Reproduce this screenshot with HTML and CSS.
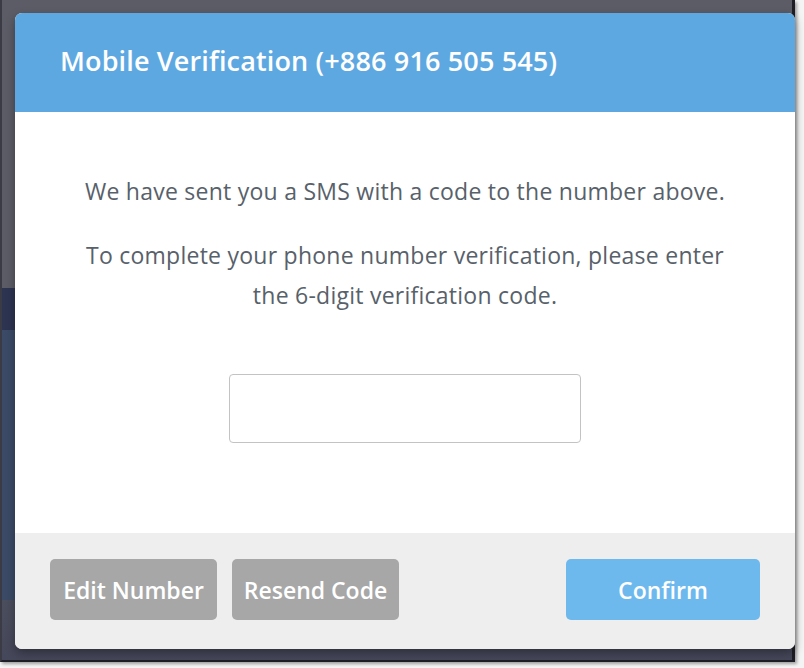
FILE: index.html
```
<html>

<head>
	<link rel="stylesheet" href="styles.css">
</head>

<body>
	<div id="screen">
		<div id="modal">
			<div id="modal-header">Mobile Verification (+886 916 505 545)</div>
			<div id="modal-body">
				<p>We have sent you a SMS with a code to the number above.</p>
				<p>To complete your phone number verification, please enter<br>the 6-digit verification code.</p>
				<input id="code-input" type="text" maxlength="6">
			</div>
			<div id="modal-footer">
				<button class="btn btn-gray">Edit Number</button>
				<button class="btn btn-gray">Resend Code</button>
				<button class="btn btn-blue">Confirm</button>
			</div>
		</div>
	</div>
</body>

</html>
```

FILE: styles.css
```
body {
	margin: 0;
	background: #f4f4f4;
	font-family: "Open Sans", Lato, sans-serif;
}

#screen {
	width: 795px;
	height: 662px;
	padding: 13px 0 0 13px;
	box-sizing: border-box;
	border-left: 2px solid #3a3b44;
	border-right: 3px solid #1e1f26;
	border-bottom: 2px solid #1e1f26;
	box-shadow: 2px 2px 3px rgba(0, 0, 0, 0.35);
	background: linear-gradient(to bottom,
			#5b5c65 0, #5b5c65 288px,
			#2d3452 288px, #2d3452 330px,
			#3b4a67 330px, #3b4a67 600px,
			#4b4e5d 600px, #45475a 100%);
}

#modal {
	width: 780px;
	height: 636px;
	display: flex;
	flex-direction: column;
	background: #fff;
	border-radius: 7px;
	overflow: hidden;
	box-shadow: 0 4px 10px rgba(0, 0, 0, 0.35);
}

#modal-header {
	height: 99px;
	flex: none;
	box-sizing: border-box;
	padding: 29px 0 0 45px;
	background: #5ea8e2;
	color: #fff;
	font-size: 27px;
	font-weight: 600;
	letter-spacing: 0.15px;
}

#modal-body {
	flex: 1;
	padding: 59px 10px 0;
	text-align: center;
	color: #58616a;
	font-size: 23px;
	letter-spacing: 0.25px;
	line-height: 40px;
}

#modal-body p {
	margin: 0 0 24px;
}

#code-input {
	display: block;
	margin: 59px auto 0;
	width: 352px;
	height: 69px;
	box-sizing: border-box;
	border: 1px solid #c3c3c3;
	border-radius: 4px;
	outline: none;
	font-size: 22px;
}

#modal-footer {
	height: 116px;
	flex: none;
	box-sizing: border-box;
	padding: 26px 35px 0;
	display: flex;
	align-items: flex-start;
	gap: 15px;
	background: #eeeeee;
}

.btn {
	height: 61px;
	padding: 0;
	border: none;
	border-radius: 5px;
	color: #fff;
	font-family: "Open Sans", Lato, sans-serif;
	font-size: 23px;
	font-weight: 600;
}

.btn-gray {
	width: 167px;
	background: #a7a7a7;
}

.btn-blue {
	width: 194px;
	margin-left: auto;
	background: #6db9ee;
}
```
